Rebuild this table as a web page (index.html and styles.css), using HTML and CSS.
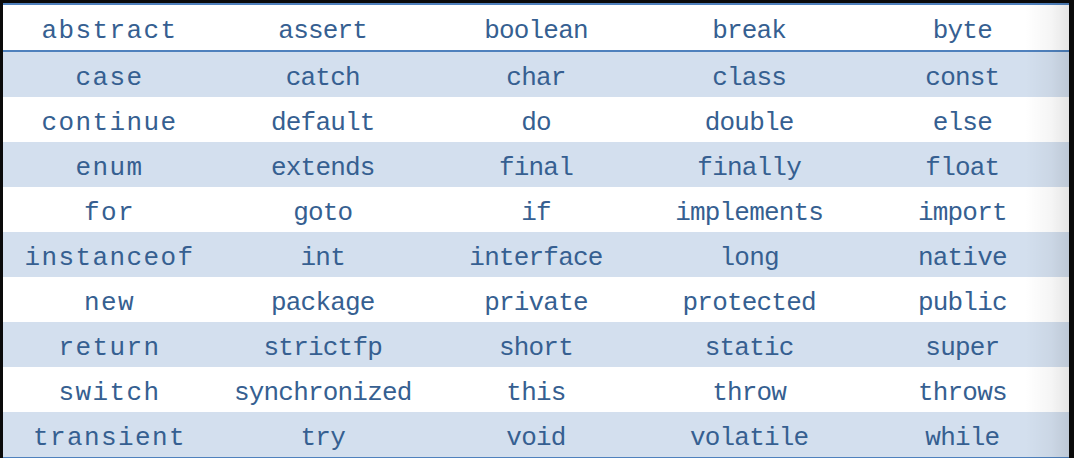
FILE: index.html
```html
<!DOCTYPE html>
<html lang="en">
<head>
<meta charset="utf-8">
<title>Java keywords</title>
<link rel="stylesheet" href="styles.css">
</head>
<body>
<div class="sheet">
  <table class="kw">
    <thead>
      <tr><th>abstract</th><th>assert</th><th>boolean</th><th>break</th><th>byte</th></tr>
    </thead>
    <tbody>
      <tr class="shade"><td>case</td><td>catch</td><td>char</td><td>class</td><td>const</td></tr>
      <tr><td>continue</td><td>default</td><td>do</td><td>double</td><td>else</td></tr>
      <tr class="shade"><td>enum</td><td>extends</td><td>final</td><td>finally</td><td>float</td></tr>
      <tr><td>for</td><td>goto</td><td>if</td><td>implements</td><td>import</td></tr>
      <tr class="shade"><td>instanceof</td><td>int</td><td>interface</td><td>long</td><td>native</td></tr>
      <tr><td>new</td><td>package</td><td>private</td><td>protected</td><td>public</td></tr>
      <tr class="shade"><td>return</td><td>strictfp</td><td>short</td><td>static</td><td>super</td></tr>
      <tr><td>switch</td><td>synchronized</td><td>this</td><td>throw</td><td>throws</td></tr>
      <tr class="shade"><td>transient</td><td>try</td><td>void</td><td>volatile</td><td>while</td></tr>
    </tbody>
  </table>
  <div class="edge-shadow"></div>
</div>
</body>
</html>
```
FILE: styles.css
```css
html, body {
  margin: 0;
  padding: 0;
  background: #0a0a0a;
  height: 458px;
  overflow: hidden;
}

.sheet {
  position: relative;
  margin: 3px 5px 0 3px;
  background: #ffffff;
}

.kw {
  width: 100%;
  border-collapse: collapse;
  table-layout: fixed;
  border-top: 2px solid #4f81bd;
  border-bottom: 1px solid #4f81bd;
}

.kw th,
.kw td {
  height: 39px;
  padding: 6px 0 0;
  text-align: center;
  vertical-align: middle;
  font-family: "Liberation Mono", "DejaVu Sans Mono", monospace;
  font-size: 26px;
  font-weight: normal;
  letter-spacing: -0.8px;
  color: #365f91;
  white-space: nowrap;
}

.kw th:first-child,
.kw td:first-child {
  letter-spacing: 1.4px;
}

.kw thead th {
  border-bottom: 2px solid #4f81bd;
}

.kw tr.shade td {
  background: #d3dfee;
}

.edge-shadow {
  position: absolute;
  top: 0;
  right: 0;
  bottom: 0;
  width: 44px;
  background: linear-gradient(to right, rgba(0,0,0,0) 0%, rgba(0,0,0,0.04) 60%, rgba(0,0,0,0.1) 100%);
  pointer-events: none;
}
```
